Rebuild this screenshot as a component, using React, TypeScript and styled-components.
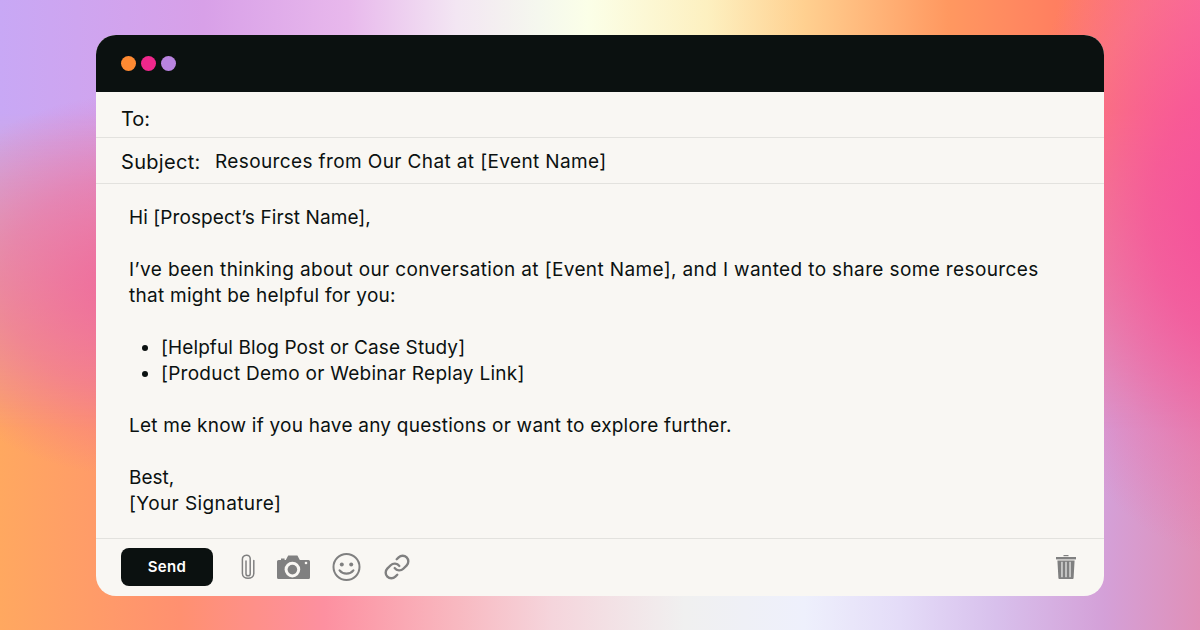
import React from "react";
import styled, { createGlobalStyle } from "styled-components";

const Global = createGlobalStyle`
  html, body { margin: 0; padding: 0; width: 1200px; height: 630px; overflow: hidden; }
  #root { width: 1200px; height: 630px; }
`;

const Page = styled.div`
  position: relative;
  box-sizing: border-box;
  width: 1200px;
  height: 630px;
  padding: 35px 96px 34px;
  font-family: Inter, "Noto Sans", sans-serif;
  color: #0b1110;
  background: linear-gradient(90deg, #ffa860 0%, #ff9070 15%, #fd90a0 27%, #f8b8c0 38%, #f5d5dc 46%, #f0f0f0 57%, #eef0fc 67%, #e4dcf8 75%, #d8c0ec 83%, #d4a0d8 92%, #e090b8 100%);

  &::before {
    content: "";
    position: absolute;
    inset: 0;
    background: linear-gradient(90deg, #c8a8f5 0%, #d8a0e8 17%, #e8b8ec 29%, #f3e6f3 38%, #f5f8ee 45%, #fbffe8 49%, #fdf0c0 59%, #ffd090 67%, #ff9860 79%, #ff7f60 88%, #ff7090 100%);
    mask-image: linear-gradient(to bottom, #000 0%, #000 18%, transparent 68%);
  }

  &::after {
    content: "";
    position: absolute;
    inset: 0;
    background:
      radial-gradient(ellipse 210px 340px at 1225px 215px, #f5509a 0%, rgba(245,80,154,0.72) 35%, rgba(240,100,165,0.34) 72%, rgba(240,100,165,0) 100%),
      radial-gradient(ellipse 230px 190px at 130px 285px, rgba(240,100,155,0.88) 0%, rgba(240,100,155,0.48) 55%, rgba(240,100,155,0) 100%);
  }
`;

const Card = styled.main`
  position: relative;
  z-index: 1;
  display: flex;
  flex-direction: column;
  height: 561px;
  border-radius: 20px;
  overflow: hidden;
  background: #f9f7f3;
`;

const TitleBar = styled.header`
  display: flex;
  align-items: center;
  gap: 5px;
  flex: 0 0 57px;
  padding: 0 25px;
  background: #0b1110;
  box-sizing: border-box;
`;

const Dot = styled.span<{ $c: string }>`
  width: 15px;
  height: 15px;
  border-radius: 50%;
  background: ${(p) => p.$c};
`;

const Field = styled.div<{ $top: number }>`
  display: flex;
  align-items: center;
  flex: 0 0 46px;
  box-sizing: border-box;
  padding: ${(p) => p.$top}px 25px 0;
  border-bottom: 1px solid #e3e2de;
  font-size: 20px;
`;

const SubjectLabel = styled.span`
  width: 94px;
  letter-spacing: 0.3px;
`;

const Line = styled.span<{ $ls?: number }>`
  display: block;
  letter-spacing: ${(p) => p.$ls ?? 0}px;
`;

const SubjectValue = styled(Line)`
  font-size: 19px;
`;

const Body = styled.div`
  flex: 1;
  padding: 21px 33px 0;
  font-size: 19px;
  line-height: 26px;
`;

const Para = styled.p`
  margin: 0 0 26px;
  &:last-child { margin-bottom: 0; }
`;

const BulletList = styled.ul`
  margin: 0 0 26px;
  padding: 0 0 0 32px;
`;

const Footer = styled.footer`
  display: flex;
  align-items: center;
  flex: 0 0 58px;
  box-sizing: border-box;
  padding: 0 28px 2px 25px;
  border-top: 1px solid #e3e2de;
`;

const SendButton = styled.button`
  width: 92px;
  height: 38px;
  border: 0;
  border-radius: 8px;
  background: #0b1110;
  color: #fff;
  font: 600 15px Inter, sans-serif;
  letter-spacing: 0.3px;
  margin-right: 27px;
`;

const Tools = styled.div`
  display: flex;
  align-items: center;
  gap: 21px;
  flex: 1;
`;

const Icon = styled.svg`
  display: block;
  flex: none;
`;

const Clip = () => (
  <Icon width="16" height="26" viewBox="0 0 16 26" fill="none" stroke="#808080" strokeWidth="1.5" strokeLinecap="round">
    <path d="M6 7V20c0 2.4 4.2 2.4 4.2 0V4.6C10.2 2.4 8.6 1 6.4 1.2 4.2 1.4 2.4 2.8 2.4 5.2V19.5c0 6.4 11.4 6.4 11.4 0V6.5" />
  </Icon>
);

const Camera = () => (
  <Icon width="33" height="24" viewBox="0 0 33 24" fill="none">
    <path fill="#808080" d="M1.5 5H4V3.4h3.6V5H8.8L11.2 0.4H20.4L22.8 5H31.5A1.5 1.5 0 0 1 33 6.5V22.5A1.5 1.5 0 0 1 31.5 24H1.5A1.5 1.5 0 0 1 0 22.5V6.5A1.5 1.5 0 0 1 1.5 5z" />
    <circle cx="15.4" cy="14.6" r="7.8" fill="#f9f7f3" />
    <circle cx="15.4" cy="14.6" r="4.8" fill="#808080" />
    <circle cx="29" cy="8" r="1.3" fill="#f9f7f3" />
  </Icon>
);

const Smile = () => (
  <Icon width="31" height="28" viewBox="0 0 31 28" fill="none" stroke="#808080" strokeWidth="2">
    <circle cx="15.5" cy="14" r="13" />
    <circle cx="10.8" cy="11.6" r="2" fill="#808080" stroke="none" />
    <circle cx="20.2" cy="11.6" r="2" fill="#808080" stroke="none" />
    <path d="M8.6 17.4c3.4 4.4 10.4 4.4 13.8 0" strokeLinecap="round" strokeWidth="2.2" />
  </Icon>
);

const Link = () => (
  <Icon width="28" height="28" viewBox="-0.3 -0.3 24.6 24.6" fill="none" stroke="#808080" strokeWidth="2.1" strokeLinecap="round" strokeLinejoin="round">
    <path d="M10 13a5 5 0 0 0 7.54.54l3-3a5 5 0 0 0-7.07-7.07l-1.72 1.71" />
    <path d="M14 11a5 5 0 0 0-7.54-.54l-3 3a5 5 0 0 0 7.07 7.07l1.71-1.71" />
  </Icon>
);

const Trash = () => (
  <Icon width="20" height="24" viewBox="0 0 20 24" fill="#808080">
    <rect x="7.5" y="0" width="5" height="1.2" />
    <rect x="0" y="2" width="20" height="2.4" />
    <path d="M1.4 5.4h17.2L17.6 23a1 1 0 0 1-1 1H3.4a1 1 0 0 1-1-1z" />
    <rect x="5.2" y="6.8" width="1.5" height="15.4" fill="#d8d8d6" />
    <rect x="9.25" y="6.8" width="1.5" height="15.4" fill="#d8d8d6" />
    <rect x="13.3" y="6.8" width="1.5" height="15.4" fill="#d8d8d6" />
  </Icon>
);

export default function App() {
  return (
    <>
      <Global />
      <Page>
        <Card>
          <TitleBar>
            <Dot $c="#ff8a32" />
            <Dot $c="#f0288c" />
            <Dot $c="#b984e0" />
          </TitleBar>
          <Field $top={9}>To:</Field>
          <Field $top={2}>
            <SubjectLabel>Subject:</SubjectLabel>
            <SubjectValue $ls={0.38}>Resources from Our Chat at [Event Name]</SubjectValue>
          </Field>
          <Body>
            <Para>
              <Line $ls={0.09}>Hi [Prospect’s First Name],</Line>
            </Para>
            <Para>
              <Line $ls={0.37}>I’ve been thinking about our conversation at [Event Name], and I wanted to share some resources</Line>
              <Line $ls={0.26}>that might be helpful for you:</Line>
            </Para>
            <BulletList>
              <li><Line $ls={0.1}>[Helpful Blog Post or Case Study]</Line></li>
              <li><Line $ls={0.27}>[Product Demo or Webinar Replay Link]</Line></li>
            </BulletList>
            <Para>
              <Line $ls={0.235}>Let me know if you have any questions or want to explore further.</Line>
            </Para>
            <Para>
              <Line>Best,</Line>
              <Line $ls={0.4}>[Your Signature]</Line>
            </Para>
          </Body>
          <Footer>
            <SendButton>Send</SendButton>
            <Tools>
              <Clip />
              <Camera />
              <Smile />
              <Link />
            </Tools>
            <Trash />
          </Footer>
        </Card>
      </Page>
    </>
  );
}
